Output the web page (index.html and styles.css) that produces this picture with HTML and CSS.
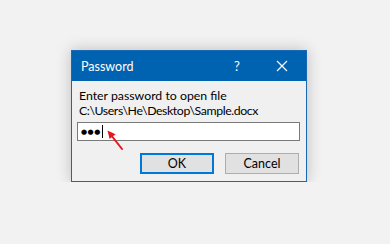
FILE: index.html
```html
<!DOCTYPE html>
<html lang="en">
<head>
  <meta charset="UTF-8" />
  <title>Password</title>
  <link rel="stylesheet" href="styles.css">
</head>
<body>
  <div class="dialog">
    <div class="titlebar">
      <span class="title">Password</span>
      <span class="help">?</span>
      <span class="close">
        <svg width="12" height="12" viewBox="0 0 12 12">
          <path d="M1 1 L11 11 M11 1 L1 11" stroke="#fff" stroke-width="1.2" />
        </svg>
      </span>
    </div>

    <div class="content">
      <p class="label">Enter password to open file</p>
      <p class="label path">C:\Users\He\Desktop\Sample.docx</p>
      <div class="field">
        <span class="dots">●●●</span><span class="caret"></span>
        <!-- red annotation arrow pointing at the caret -->
        <svg class="arrow" width="24" height="26" viewBox="0 0 24 26">
          <path d="M6 7 L17 21" stroke="#e8161c" stroke-width="2" stroke-linecap="round" />
          <path d="M2.5 2.5 L10.5 6.2 L4.6 10.9 Z" fill="#e8161c" />
        </svg>
      </div>
      <div class="buttons">
        <button class="btn primary">OK</button>
        <button class="btn">Cancel</button>
      </div>
    </div>
  </div>
</body>
</html>
```

FILE: styles.css
```css
body {
  margin: 0;
  padding: 50px 0 0 71px;
  background: #f2f2f2;
  font-family: Lato, 'Liberation Sans', sans-serif;
  font-size: 12px;
  color: #000;
}

.dialog {
  width: 234px;
  border: 1px solid #1a68b4;
  background: #f0f0f0;
  box-shadow: 0 0 14px rgba(0, 0, 0, 0.22);
}

.titlebar {
  height: 30px;
  background: #0063b1;
  color: #fff;
  display: flex;
  align-items: center;
  padding-left: 9px;
}

.title {
  flex: 1;
  font-size: 12.5px;
}

.help {
  width: 22px;
  text-align: center;
  font-size: 13px;
  margin-right: 22px;
}

.close {
  width: 24px;
  display: flex;
  justify-content: center;
  margin-right: 12px;
}

.content {
  padding: 7px 6px 7px 5px;
}

.label {
  margin: 0;
  padding-left: 2px;
  line-height: 15px;
  font-size: 12.3px;
  white-space: nowrap;
}

/* the backslashes run wide in Lato */
.path {
  letter-spacing: -0.4px;
}

.field {
  position: relative;
  margin-top: 4px;
  height: 17px;
  border: 1px solid #7a7a7a;
  background: #fff;
  display: flex;
  align-items: center;
  padding-left: 3px;
}

.dots {
  font-family: 'DejaVu Sans', sans-serif;
  font-size: 7px;
  letter-spacing: 0.5px;
}

.caret {
  width: 1px;
  height: 13px;
  background: #000;
  margin-left: 1px;
}

.arrow {
  position: absolute;
  left: 27px;
  top: 5px;
}

.buttons {
  display: flex;
  justify-content: flex-end;
  gap: 11px;
  margin-top: 12px;
  padding-right: 1px;
}

.btn {
  width: 74px;
  height: 21px;
  background: #e1e1e1;
  border: 1px solid #adadad;
  font-family: Lato, 'Liberation Sans', sans-serif;
  font-size: 12.5px;
  padding: 0;
  color: #000;
}

.primary {
  border: 2px solid #0078d7;
}
```
